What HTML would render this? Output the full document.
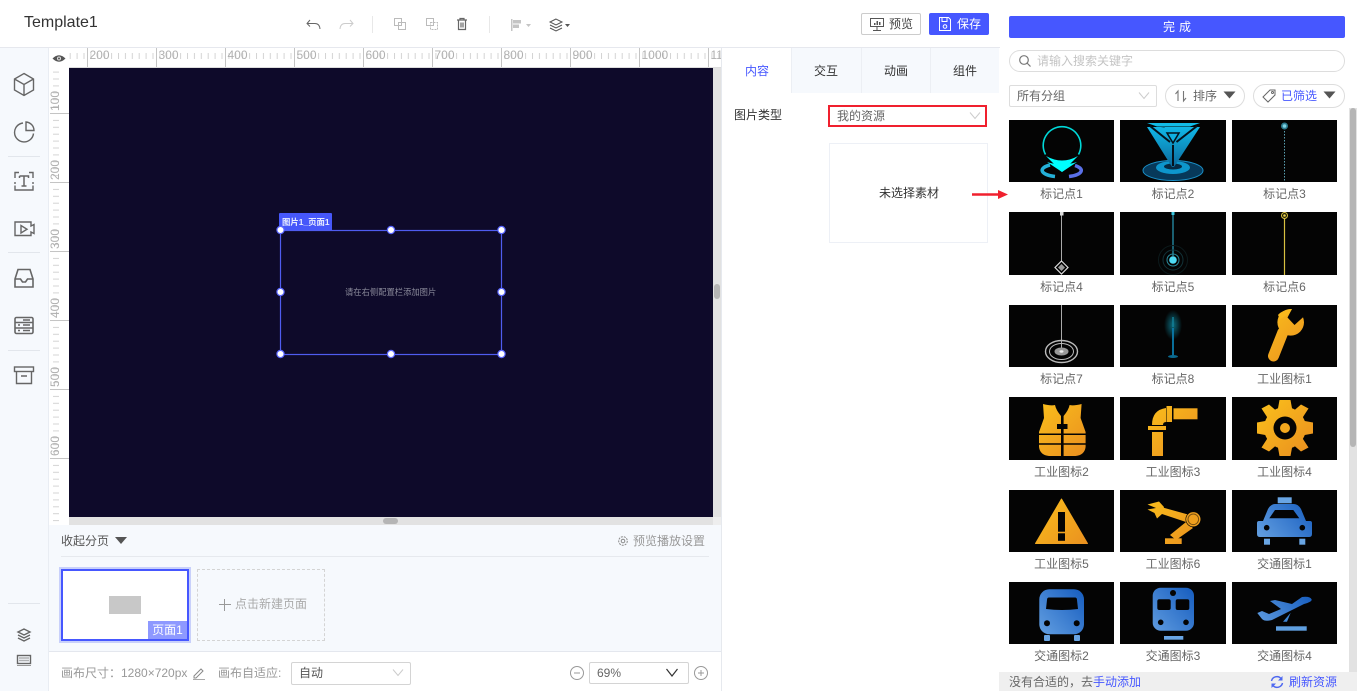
<!DOCTYPE html>
<html><head><meta charset="utf-8"><style>
*{box-sizing:border-box}
html,body{margin:0;padding:0;width:1357px;height:691px;overflow:hidden;background:#fff;font-family:"Liberation Sans","Noto Sans CJK SC",sans-serif;font-size:12px;color:#666}
.a{position:absolute}
.t{position:absolute;white-space:nowrap;line-height:16px}
.lb{position:absolute;width:105px;text-align:center;line-height:16px;color:#666;white-space:nowrap}
svg{position:absolute;overflow:hidden}
.im{position:absolute;background:#040404}
.ic{fill:none;stroke:#666;stroke-width:1.4}
</style></head><body>
<svg width="0" height="0" style="left:0;top:0"><defs>
<linearGradient id="or" gradientUnits="userSpaceOnUse" x1="25" y1="5" x2="80" y2="60"><stop offset="0" stop-color="#fbc11b"/><stop offset="1" stop-color="#e98d20"/></linearGradient>
<linearGradient id="bl" gradientUnits="userSpaceOnUse" x1="25" y1="55" x2="80" y2="8"><stop offset="0" stop-color="#6aa5e4"/><stop offset="1" stop-color="#1259bd"/></linearGradient>
<linearGradient id="cy" x1="0" y1="0" x2="0" y2="1"><stop offset="0" stop-color="#10b8e8"/><stop offset="1" stop-color="#0c6a9c"/></linearGradient>
<radialGradient id="gl"><stop offset="0" stop-color="#0b6a7c"/><stop offset="1" stop-color="#040404"/></radialGradient>
</defs></svg>

<!-- header -->
<div class="a" style="left:0;top:47px;width:1000px;height:1px;background:#e6e8ee"></div>
<div class="t" style="left:24px;top:13px;font-size:16px;line-height:20px;color:#333">Template1</div>
<svg style="left:300px;top:10px" width="300" height="28" viewBox="0 0 300 28">
<g fill="none" stroke="#666" stroke-width="1"><path d="M10 10l-3 3.500 3 3M7 13.500h8q4.500 0 5 5.500"/></g>
<g fill="none" stroke="#ccc" stroke-width="1"><path d="M50 10l3 3.500-3 3M53 13.500h-8q-4.500 0-5 5.500"/></g>
<path d="M72.500 6v17" stroke="#e8e8e8"/>
<g fill="none" stroke="#bbb"><rect x="94.500" y="8.500" width="7" height="7"/><rect x="98.500" y="12.500" width="7" height="7"/></g>
<g fill="none" stroke="#bbb"><rect x="126.500" y="8.500" width="7" height="7"/><rect x="130.500" y="12.500" width="7" height="7" stroke-dasharray="2 1"/></g>
<g fill="none" stroke="#666" stroke-width="1.200"><path d="M157 10h10M160 10V8.500h4V10M158.500 10v9.500h7V10"/><path d="M161 12.500v5M163 12.500v5"/></g>
<path d="M189.500 6v17" stroke="#e8e8e8"/>
<g fill="#c4c4c4"><rect x="211" y="9" width="1.500" height="12"/><rect x="213" y="10" width="8" height="3.500"/><rect x="213" y="14.500" width="6" height="3.500"/><path d="M226 14h5l-2.500 3z"/></g>
<g fill="none" stroke="#555" stroke-width="1"><path d="M256 9l-6 3 6 3 6-3zM250 15l6 3 6-3M250 18l6 3 6-3"/></g><path d="M265 14h5l-2.500 3z" fill="#555"/>
</svg>
<div class="a" style="left:861px;top:13px;width:60px;height:22px;border:1px solid #ccc;border-radius:2px"></div>
<svg style="left:868px;top:16px" width="18" height="16"><g fill="none" stroke="#555"><rect x="2.500" y="2.500" width="13" height="8"/><path d="M9 11v3M5 14.500h8"/></g><path d="M6 9V7h1.500v2zM8.500 9V5H10v4zM11 9V6h1.500v3z" fill="#555"/></svg>
<div class="t" style="left:889px;top:16px;color:#444">预览</div>
<div class="a" style="left:929px;top:13px;width:60px;height:22px;background:#4657ff;border-radius:2px"></div>
<svg style="left:937px;top:16px" width="16" height="16"><g fill="none" stroke="#fff"><path d="M2.500 1.500h9l2 2v11h-11z"/><path d="M5 1.500v4h5v-4"/><circle cx="8" cy="10.500" r="1.800"/></g></svg>
<div class="t" style="left:957px;top:16px;color:#fff">保存</div>

<!-- left sidebar -->
<div class="a" style="left:0;top:48px;width:49px;height:643px;background:#f6f9fd;border-right:1px solid #e9edf3"></div>
<svg style="left:0;top:48px" width="49" height="643" viewBox="0 0 49 643">
<g class="ic"><path d="M24 25.500l9.500 5.500v11l-9.500 5.500-9.500-5.500V31zM14.500 31l9.500 5.500L33.500 31M24 36.500v11"/>
<path d="M23 75a9.500 9.500 0 1 0 10.500 10.500"/><path d="M26 74v8.500h8a8.500 8.500 0 0 0-8-8.500z"/></g>
<path d="M8 108.500h32" stroke="#e2e6ec"/>
<g class="ic"><path d="M15 128v-3.500h4M29 124.500h4v3.500M15 137.500v4.500h18v-4.500M15 128v2M15 134v2M33 128v2M33 134v2"/><path d="M19.500 128h9v2M19.500 130v-2M24 128v10M21.500 138h5" stroke-width="1.500"/>
<path d="M15 174h16v4l3-1.500v9l-3-1.500v3.500H15zM21 177.500v7.500l6-3.750z"/></g>
<path d="M8 204.500h32" stroke="#e2e6ec"/>
<g class="ic"><path d="M15 231l3-9.500h12l3 9.500v8H15zM15 231h5.500l2 3h3l2-3H33" stroke-width="1.600"/>
<rect x="15" y="269.500" width="18" height="16" rx="1.500" stroke-width="1.600"/><path d="M15 274.500h18M15 280h18M18 277h2M18 282.500h2M23 272h7M23 277h7M23 282.500h7"/></g>
<path d="M8 302.500h32" stroke="#e2e6ec"/>
<g class="ic" stroke-width="1.600"><rect x="14.500" y="319" width="19" height="4.500"/><path d="M16.500 323.500v12h15v-12M21 328h6" /></g>
<path d="M8 555.500h32" stroke="#e2e6ec"/>
<g class="ic" stroke-width="1"><path d="M24 581l-6 3 6 3 6-3zM18 587l6 3 6-3M18 590l6 3 6-3"/>
<rect x="17.500" y="607.500" width="13" height="8"/><path d="M19.500 610h9M19.500 612.500h9" stroke-dasharray="1 1"/></g>
<path d="M17 617.500h14" stroke="#999"/>
</svg>

<!-- rulers -->
<svg style="left:49px;top:48px" width="673" height="477" viewBox="49 48 673 477">
<defs>
<pattern id="hp" patternUnits="userSpaceOnUse" x="0.700" y="0" width="6.900" height="20"><rect x="0" y="13" width="1" height="6" fill="#d4d4d4"/></pattern>
<pattern id="vp" patternUnits="userSpaceOnUse" x="0" y="113" width="20" height="6.900"><rect x="13" y="0" width="6" height="1" fill="#d4d4d4"/></pattern>
</defs>
<rect x="49" y="48" width="673" height="477" fill="#fff"/>
<rect x="69" y="48" width="652" height="20" fill="url(#hp)"/>
<rect x="50" y="68" width="19" height="457" fill="url(#vp)"/>
<g stroke="#c4c4c4"><path d="M87.500 48v19M156.500 48v19M225.500 48v19M294.500 48v19M363.500 48v19M432.500 48v19M501.500 48v19M570.500 48v19M639.500 48v19M708.500 48v19"/>
<path d="M50 113.500h19M50 182.500h19M50 251.500h19M50 320.500h19M50 389.500h19M50 458.500h19"/></g>
<path d="M69 67.500h652" stroke="#ddd"/>
<g fill="#b0b0b0" font-size="12" font-family="Liberation Sans,sans-serif">
<text x="89.500" y="59">200</text><text x="158.500" y="59">300</text><text x="227.500" y="59">400</text><text x="296.500" y="59">500</text><text x="365.500" y="59">600</text><text x="434.500" y="59">700</text><text x="503.500" y="59">800</text><text x="572.500" y="59">900</text><text x="641.500" y="59">1000</text><text x="710.500" y="59">1100</text>
<text transform="translate(59,111) rotate(-90)">100</text><text transform="translate(59,180) rotate(-90)">200</text><text transform="translate(59,249) rotate(-90)">300</text><text transform="translate(59,318) rotate(-90)">400</text><text transform="translate(59,387) rotate(-90)">500</text><text transform="translate(59,456) rotate(-90)">600</text>
</g>
<rect x="49" y="48" width="20" height="20" fill="#fff"/>
<path d="M52.500 58.500q6.500-6.500 13 0q-6.500 6.500-13 0z" fill="#555"/><circle cx="59" cy="58.500" r="2" fill="#ddd"/><circle cx="59" cy="58.500" r="1" fill="#555"/>
</svg>

<!-- canvas -->
<div class="a" style="left:69px;top:68px;width:644px;height:449px;background:#0e0a2a"></div>
<div class="a" style="left:713px;top:68px;width:8px;height:449px;background:#e2e2e2"></div>
<div class="a" style="left:714px;top:284px;width:6px;height:15px;background:#b5b5b5;border-radius:3px"></div>
<div class="a" style="left:69px;top:517px;width:644px;height:8px;background:#e2e2e2"></div>
<div class="a" style="left:713px;top:517px;width:8px;height:8px;background:#eee"></div>
<div class="a" style="left:383px;top:518px;width:15px;height:6px;background:#b5b5b5;border-radius:3px"></div>
<div class="a" style="left:279px;top:213px;width:53px;height:17px;background:#4657fa;border-radius:1px 1px 0 0"></div>
<div class="t" style="left:282px;top:214px;font-size:8.400px;line-height:16px;color:#e8ecff;font-weight:bold">图片1_页面1</div>
<div class="t" style="left:345px;top:284px;font-size:8.300px;color:#8a8a9a">请在右侧配置栏添加图片</div>
<svg style="left:272px;top:222px" width="238" height="140" viewBox="272 222 238 140">
<rect x="280.500" y="230.500" width="221" height="124" fill="none" stroke="#4f5cf0" stroke-width="1.200"/>
<g fill="#fff" stroke="#5a66ff" stroke-width="1.200"><circle cx="280.500" cy="230" r="3.600"/><circle cx="391" cy="230" r="3.600"/><circle cx="501.500" cy="230" r="3.600"/><circle cx="280.500" cy="292" r="3.600"/><circle cx="501.500" cy="292" r="3.600"/><circle cx="280.500" cy="354" r="3.600"/><circle cx="391" cy="354" r="3.600"/><circle cx="501.500" cy="354" r="3.600"/></g>
</svg>

<!-- pages panel -->
<div class="a" style="left:49px;top:525px;width:672px;height:127px;background:#f6f9fd;border-bottom:1px solid #e4e7ee"></div>
<div class="t" style="left:61px;top:533px;color:#555">收起分页</div>
<svg style="left:114px;top:536px" width="14" height="10"><path d="M1 1h12L7 8z" fill="#555"/></svg>
<svg style="left:617px;top:535px" width="12" height="12"><g fill="none" stroke="#888"><circle cx="6" cy="6" r="1.800"/><circle cx="6" cy="6" r="4.300" stroke-dasharray="2 1"/></g></svg>
<div class="t" style="left:633px;top:533px;color:#999">预览播放设置</div>
<div class="a" style="left:61px;top:556px;width:648px;height:1px;background:#e6e9ee"></div>
<div class="a" style="left:59px;top:567px;width:132px;height:76px;background:#fff;border:2px solid #c8d0fb"></div>
<div class="a" style="left:61px;top:569px;width:128px;height:72px;background:#fff;border:2px solid #4657ff"></div>
<div class="a" style="left:109px;top:596px;width:32px;height:18px;background:#c8c8c8"></div>
<div class="a" style="left:148px;top:621px;width:39px;height:18px;background:#8e99ff;color:#fff;text-align:center;line-height:19px">页面1</div>
<div class="a" style="left:197px;top:569px;width:128px;height:72px;border:1px dashed #d4d4d4"></div>
<svg style="left:218px;top:598px" width="14" height="14"><path d="M1 6.500h12M6.500 1v12" stroke="#999"/></svg>
<div class="t" style="left:235px;top:596px;color:#aaa">点击新建页面</div>

<!-- bottom bar -->
<div class="t" style="left:61px;top:665px;color:#999">画布尺寸：1280×720px</div>
<svg style="left:192px;top:666px" width="14" height="14"><g fill="none" stroke="#888"><path d="M2 10l7-7 2 2-7 7H2z"/></g><path d="M1 13.500h12" stroke="#aaa"/></svg>
<div class="t" style="left:218px;top:665px;color:#999">画布自适应:</div>
<div class="a" style="left:291px;top:662px;width:120px;height:23px;background:#fff;border:1px solid #d4d4d4;border-radius:2px"></div>
<div class="t" style="left:299px;top:665px;color:#555">自动</div>
<svg style="left:392px;top:668px" width="12" height="10"><path d="M1 1.500l5 6 5-6" fill="none" stroke="#ccc"/></svg>
<svg style="left:569px;top:665px" width="16" height="16"><circle cx="8" cy="8" r="6.500" fill="none" stroke="#999"/><path d="M5 8h6" stroke="#999"/></svg>
<div class="a" style="left:589px;top:662px;width:100px;height:22px;border:1px solid #d4d4d4;border-radius:2px"></div>
<div class="t" style="left:597px;top:665px;color:#666">69%</div>
<svg style="left:665px;top:667px" width="14" height="12"><path d="M1.500 2l5.500 7 5.500-7" fill="none" stroke="#333" stroke-width="1.200"/></svg>
<svg style="left:693px;top:665px" width="16" height="16"><circle cx="8" cy="8" r="6.500" fill="none" stroke="#999"/><path d="M5 8h6M8 5v6" stroke="#999"/></svg>

<!-- config panel -->
<div class="a" style="left:721px;top:48px;width:1px;height:643px;background:#e6e9ee"></div>
<div class="a" style="left:792px;top:48px;width:207px;height:45px;background:#f6f9fd"></div>
<div class="a" style="left:791px;top:48px;width:1px;height:45px;background:#eceff4"></div>
<div class="a" style="left:861px;top:48px;width:1px;height:45px;background:#eceff4"></div>
<div class="a" style="left:930px;top:48px;width:1px;height:45px;background:#eceff4"></div>
<div class="t" style="left:745px;top:63px;color:#4657ff">内容</div>
<div class="t" style="left:814px;top:63px;color:#333">交互</div>
<div class="t" style="left:884px;top:63px;color:#333">动画</div>
<div class="t" style="left:953px;top:63px;color:#333">组件</div>
<div class="t" style="left:734px;top:107px;color:#333">图片类型</div>
<div class="a" style="left:828px;top:105px;width:159px;height:22px;border:2px solid #f0202e"></div>
<div class="t" style="left:837px;top:108px;color:#666">我的资源</div>
<svg style="left:969px;top:111px" width="12" height="10"><path d="M1 1.500l5 6 5-6" fill="none" stroke="#ccc"/></svg>
<div class="a" style="left:829px;top:143px;width:159px;height:100px;border:1px solid #edf0f6"></div>
<div class="t" style="left:879px;top:185px;color:#333">未选择素材</div>

<!-- resource panel -->
<div class="a" style="left:1009px;top:16px;width:336px;height:22px;background:#4657ff;border-radius:2px;color:#fff;text-align:center;line-height:22px;letter-spacing:4px;padding-left:4px">完成</div>
<div class="a" style="left:1009px;top:50px;width:336px;height:22px;border:1px solid #ddd;border-radius:11px"></div>
<svg style="left:1018px;top:54px" width="14" height="14"><g fill="none" stroke="#777" stroke-width="1.200"><circle cx="6" cy="6" r="4.300"/><path d="M9 9l3.500 3.500"/></g></svg>
<div class="t" style="left:1037px;top:53px;color:#c4c4c4">请输入搜索关键字</div>
<div class="a" style="left:1009px;top:85px;width:148px;height:22px;border:1px solid #ddd;border-radius:2px"></div>
<div class="t" style="left:1017px;top:88px;color:#666">所有分组</div>
<svg style="left:1138px;top:91px" width="12" height="10"><path d="M1 1.500l5 6 5-6" fill="none" stroke="#ccc"/></svg>
<div class="a" style="left:1165px;top:84px;width:80px;height:24px;border:1px solid #ddd;border-radius:12px"></div>
<svg style="left:1174px;top:89px" width="14" height="14"><path d="M4 12V2L1.500 5M9.500 2v10L12 9" fill="none" stroke="#777" stroke-width="1.100"/></svg>
<div class="t" style="left:1193px;top:88px;color:#666">排序</div>
<svg style="left:1223px;top:91px" width="13" height="9"><path d="M0.500 0.500h12L6.500 7.500z" fill="#555"/></svg>
<div class="a" style="left:1253px;top:84px;width:92px;height:24px;border:1px solid #ddd;border-radius:12px"></div>
<svg style="left:1262px;top:89px" width="15" height="14"><g fill="none" stroke="#666"><path d="M1 8l7-7h5v5l-7 7z"/><circle cx="10.500" cy="3.500" r="1"/></g></svg>
<div class="t" style="left:1281px;top:88px;color:#4657ff">已筛选</div>
<svg style="left:1323px;top:91px" width="13" height="9"><path d="M0.500 0.500h12L6.500 7.500z" fill="#555"/></svg>
<div class="a" style="left:1349px;top:108px;width:8px;height:564px;background:#e2e2e2"></div>
<div class="a" style="left:1349.500px;top:108px;width:6.500px;height:339px;background:#b5b5b5;border-radius:3px"></div>

<!-- arrow -->
<svg style="left:970px;top:188px" width="40" height="12"><path d="M2 6.500h26" stroke="#f0202e" stroke-width="2.400"/><path d="M28 2l10 4.500-10 4.500z" fill="#f0202e"/></svg>

<!-- row 1 -->
<svg class="im" style="left:1009px;top:120px" width="105" height="62" viewBox="0 0 105 62">
<path d="M36.500 34.500A18.800 18.800 0 1 1 69.500 34.500" fill="none" stroke="#00d8d8" stroke-width="1.600"/>
<path d="M37 36L53 52 69 36q-16 9-32 0z" fill="#0ff"/><path d="M38 42q15 5 30 0L53 52z" fill="#0ff"/>
<path d="M41 45A18.500 6.500 0 0 0 46 56.500" fill="none" stroke="#25b0d8" stroke-width="3.500"/>
<path d="M60 56.500A18.500 6.500 0 0 0 66 45.500" fill="none" stroke="#5a70e8" stroke-width="3.500"/>
</svg>
<div class="lb" style="left:1009px;top:186px">标记点1</div>
<svg class="im" style="left:1120px;top:120px" width="106" height="62" viewBox="0 0 106 62">
<ellipse cx="53" cy="50.500" rx="30" ry="10" fill="#07395a" stroke="#1a90c8"/><ellipse cx="53" cy="47.500" rx="17" ry="6.500" fill="#0d96cc"/><ellipse cx="53" cy="46.500" rx="9" ry="3" fill="#052b44"/>
<path d="M27 7H80L54 47h-2z" fill="url(#cy)"/>
<path d="M27 3h53l-10 3.500H37z" fill="#12bce8"/>
<path d="M30 6L50 22M77 6L56.500 22M53 25v21" fill="none" stroke="#04121c" stroke-width="2"/>
<path d="M37 6.500l8 0-.5 1z" fill="#04121c"/>
<path d="M47 13h12l-6 10z" fill="#0fb0e0" stroke="#04121c" stroke-width="1.500"/>
</svg>
<div class="lb" style="left:1120.500px;top:186px">标记点2</div>
<svg class="im" style="left:1232px;top:120px" width="105" height="62" viewBox="0 0 105 62">
<path d="M52.500 8v54" stroke="#5a9fb0" stroke-dasharray="1.500 1.500"/><circle cx="52.500" cy="6" r="3.500" fill="#2c7c90"/><circle cx="52.500" cy="6" r="1.800" fill="#7fd0e0"/>
</svg>
<div class="lb" style="left:1232px;top:186px">标记点3</div>
<!-- row 2 -->
<svg class="im" style="left:1009px;top:212px" width="105" height="63" viewBox="0 0 105 63">
<path d="M52.500 2v48" stroke="#aaa"/><rect x="51" y="0" width="3.500" height="3.500" fill="#ddd"/>
<path d="M52.500 49l6.500 6.500-6.500 6.500-6.500-6.500z" fill="none" stroke="#ddd" stroke-width="1.200"/><path d="M52.500 52l3.500 3.500-3.500 3.500-3.500-3.500z" fill="#999"/>
</svg>
<div class="lb" style="left:1009px;top:279px">标记点4</div>
<svg class="im" style="left:1120px;top:212px" width="106" height="63" viewBox="0 0 106 63">
<path d="M53 2v42" stroke="#1a5f70" stroke-width="2"/><rect x="51.500" y="0" width="3" height="3" fill="#3cc8e0"/>
<g fill="none"><circle cx="53" cy="48" r="14.500" stroke="#0c1a1c"/><circle cx="53" cy="48" r="10" stroke="#123238"/><circle cx="53" cy="48" r="6" stroke="#2a8a9c"/></g>
<circle cx="53" cy="48" r="3.800" fill="#4fdcf5"/>
</svg>
<div class="lb" style="left:1120.500px;top:279px">标记点5</div>
<svg class="im" style="left:1232px;top:212px" width="105" height="63" viewBox="0 0 105 63">
<path d="M52.500 6v57" stroke="#d8c040" stroke-width="1.200"/><circle cx="52.500" cy="3.500" r="3" fill="#1a1a04" stroke="#d8c040"/><circle cx="52.500" cy="3.500" r="1.300" fill="#e8d050"/>
</svg>
<div class="lb" style="left:1232px;top:279px">标记点6</div>
<!-- row 3 -->
<svg class="im" style="left:1009px;top:305px" width="105" height="62" viewBox="0 0 105 62">
<path d="M52.500 0v46" stroke="#aaa"/><g fill="none" stroke="#bbb"><ellipse cx="52.500" cy="46.500" rx="16" ry="11" stroke-width="1.400"/><ellipse cx="52.500" cy="46.500" rx="12" ry="8"/></g><ellipse cx="52.500" cy="46.500" rx="7" ry="4" fill="#999"/><ellipse cx="52.500" cy="46.500" rx="2" ry="1.200" fill="#eee"/>
</svg>
<div class="lb" style="left:1009px;top:371px">标记点7</div>
<svg class="im" style="left:1120px;top:305px" width="106" height="62" viewBox="0 0 106 62">
<ellipse cx="53" cy="20" rx="9" ry="15" fill="url(#gl)"/><path d="M53 12v10" stroke="#128098" stroke-width="1.500"/><path d="M53 23v28" stroke="#0a7aaa" stroke-width="1.800"/><ellipse cx="53" cy="51.500" rx="5" ry="1.500" fill="#0a6a90"/>
</svg>
<div class="lb" style="left:1120.500px;top:371px">标记点8</div>
<svg class="im" style="left:1232px;top:305px" width="105" height="62" viewBox="0 0 105 62">
<path d="M41.500 51L51 27" stroke="url(#or)" stroke-width="11" stroke-linecap="round"/>
<circle cx="58.700" cy="17.300" r="13.300" fill="url(#or)"/>
<path d="M60.500 3L55.500 12.500 62.500 20 73 10.500V0H60.500z" fill="#040404"/>
<path d="M46 10q4-5 14-6l-3 5-9 5z" fill="#f9b91c"/>
</svg>
<div class="lb" style="left:1232px;top:371px">工业图标1</div>
<!-- row 4 -->
<svg class="im" style="left:1009px;top:397px" width="105" height="63" viewBox="0 0 105 63">
<g fill="url(#or)"><path d="M34 7Q42 9 46 8 47 13 52 19V59H40Q31 58 30 50V35L35 21z"/><path d="M72.600 7Q64.600 9 60.600 8 59.600 13 54.600 19V59H66.600Q75.600 58 76.600 50V35L71.600 21z"/></g>
<rect x="48" y="27" width="10.500" height="5" fill="#040404"/>
<path d="M29 37.300h49M29 47h49" stroke="#040404" stroke-width="1.500"/>
</svg>
<div class="lb" style="left:1009px;top:464px">工业图标2</div>
<svg class="im" style="left:1120px;top:397px" width="106" height="63" viewBox="0 0 106 63">
<g fill="url(#or)"><rect x="32" y="35" width="11" height="24"/><rect x="28" y="29" width="18" height="4"/><path d="M32 28Q32 13 46 11V25Q43 25 43 28z"/><rect x="46.500" y="9" width="5.500" height="16"/><rect x="53.500" y="11.300" width="24" height="11"/></g>
</svg>
<div class="lb" style="left:1120.500px;top:464px">工业图标3</div>
<svg class="im" style="left:1232px;top:397px" width="105" height="63" viewBox="0 0 105 63">
<g fill="url(#or)"><circle cx="53" cy="31" r="21"/>
<path d="M47.500 3h11l2 11h-15z"/><path d="M47.500 59h11l2-11h-15z"/><path d="M25 25.500v11l11 2v-15z"/><path d="M81 25.500v11l-11 2v-15z"/>
<path d="M29.500 11.500l7.500-4 7 6-8 8z"/><path d="M76.500 11.500l-7.500-4-7 6 8 8z"/><path d="M29.500 50.500l7.500 4 7-6-8-8z"/><path d="M76.500 50.500l-7.500 4-7-6 8-8z"/></g>
<circle cx="53" cy="31" r="11.500" fill="#040404"/><circle cx="53" cy="31" r="5" fill="#f3a81e"/>
</svg>
<div class="lb" style="left:1232px;top:464px">工业图标4</div>
<!-- row 5 -->
<svg class="im" style="left:1009px;top:490px" width="105" height="62" viewBox="0 0 105 62">
<path d="M52.500 9L78.500 53.500H26.500z" fill="url(#or)" stroke="url(#or)" stroke-linejoin="round"/><rect x="49" y="22" width="7" height="19.700" fill="#040404"/><rect x="49" y="43.300" width="7" height="7.500" fill="#040404"/>
</svg>
<div class="lb" style="left:1009px;top:556px">工业图标5</div>
<svg class="im" style="left:1120px;top:490px" width="106" height="62" viewBox="0 0 106 62">
<g fill="url(#or)">
<path d="M27.500 14.500L39 11.500 44 17 42 24 37 28.500 34.500 23 27.500 19.500 36 18z"/>
<path d="M41 17L68 24.500 66 32 42 24z"/>
<path d="M66 32L73 38 56 50 50 45z"/>
<rect x="45" y="48.300" width="16.700" height="5.700"/></g>
<circle cx="73.300" cy="29.300" r="7.500" fill="#f0a01e" stroke="#040404" stroke-width=".6"/><circle cx="73.300" cy="29.300" r="5.300" fill="none" stroke="#7a5010"/>
</svg>
<div class="lb" style="left:1120.500px;top:556px">工业图标6</div>
<svg class="im" style="left:1232px;top:490px" width="105" height="62" viewBox="0 0 105 62">
<rect x="45.700" y="7.300" width="14" height="6" fill="#69a5e4"/>
<path d="M43 14H62Q66 14 69 19L74 31H78Q80 31 80 33V44Q80 47 77 47H28Q25 47 25 44V33Q25 31 27 31H31L36 19Q39 14 43 14z" fill="url(#bl)"/>
<path d="M37.300 28.300L43 20H61.300L67.300 28.300z" fill="#040404"/>
<circle cx="34.700" cy="37.700" r="2.800" fill="#040404"/><circle cx="70.300" cy="37.700" r="2.800" fill="#040404"/>
<rect x="32" y="48.700" width="6" height="6" fill="#69a5e4"/><rect x="67.300" y="48.700" width="6" height="6" fill="#69a5e4"/>
</svg>
<div class="lb" style="left:1232px;top:556px">交通图标1</div>
<!-- row 6 -->
<svg class="im" style="left:1009px;top:582px" width="105" height="62" viewBox="0 0 105 62">
<rect x="30.300" y="7.300" width="44.700" height="45" rx="10" fill="url(#bl)"/><path d="M40 15.500H66Q68 15.500 68 18L69 27Q53 29 37 27L38 18Q38 15.500 40 15.500z" fill="#040404"/>
<circle cx="38" cy="41.300" r="3" fill="#040404"/><circle cx="67.700" cy="41.300" r="3" fill="#040404"/>
<rect x="35" y="53" width="6" height="6" rx="1" fill="#69a5e4"/><rect x="65" y="53" width="6" height="6" rx="1" fill="#69a5e4"/>
</svg>
<div class="lb" style="left:1009px;top:648px">交通图标2</div>
<svg class="im" style="left:1120px;top:582px" width="106" height="62" viewBox="0 0 106 62">
<rect x="32.700" y="5.700" width="41.300" height="43" rx="8" fill="url(#bl)"/><circle cx="53" cy="11" r="3" fill="#040404"/>
<rect x="37.300" y="17.300" width="13.400" height="10.700" rx="2" fill="#040404"/><rect x="55.700" y="17.300" width="13.600" height="10.700" rx="2" fill="#040404"/>
<circle cx="40.700" cy="40.300" r="2.800" fill="#040404"/><circle cx="66" cy="40.300" r="2.800" fill="#040404"/>
<rect x="44" y="54" width="19.300" height="3.700" fill="#69a5e4"/>
</svg>
<div class="lb" style="left:1120.500px;top:648px">交通图标3</div>
<svg class="im" style="left:1232px;top:582px" width="105" height="62" viewBox="0 0 105 62">
<path d="M25.300 31L30 29 37 32 49 27 38 19 43 18 60 22 70 15Q78 14 79.700 17.500 80 20 72 22L40 38Q33 40 30 37z" fill="url(#bl)"/><path d="M51 39.700L58.700 30.700 55 39.700z" fill="#3f87d6"/>
<rect x="44" y="44.300" width="30.700" height="4.400" fill="#5f9fe0"/>
</svg>
<div class="lb" style="left:1232px;top:648px">交通图标4</div>

<!-- resource footer -->
<div class="a" style="left:999px;top:672px;width:358px;height:19px;background:#efefef"></div>
<div class="t" style="left:1009px;top:674px;color:#666">没有合适的，去<span style="color:#4657ff">手动添加</span></div>
<svg style="left:1270px;top:675px" width="14" height="14"><g fill="none" stroke="#4e68f0" stroke-width="1.500"><path d="M1.500 6A5.500 5.500 0 0 1 11 3.500M12.500 8A5.500 5.500 0 0 1 3 10.500"/></g><path d="M12.500 1v4.500H8zM1.500 13V8.500H6z" fill="#4e68f0"/></svg>
<div class="t" style="left:1289px;top:674px;color:#4657ff">刷新资源</div>
</body></html>
